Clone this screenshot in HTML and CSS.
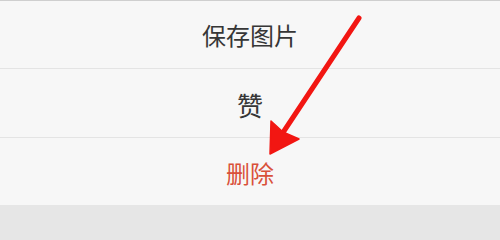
FILE: index.html
```html
<!DOCTYPE html>
<html lang="zh">
<head>
<meta charset="utf-8">
<link rel="stylesheet" href="styles.css">
</head>
<body>
<div class="sheet">
  <div class="item">保存图片</div>
  <div class="item item-like">赞</div>
  <div class="item item-danger">删除</div>
  <div class="footer-strip"></div>
  <svg class="arrow" width="500" height="215" viewBox="0 0 500 215">
    <line x1="359" y1="18" x2="284" y2="131" stroke="#f21612" stroke-width="5" stroke-linecap="round"/>
    <polygon points="270,154 271,121 283,132 299,139" fill="#f21612" stroke="#f21612" stroke-width="1.5" stroke-linejoin="round"/>
  </svg>
</div>
</body>
</html>
```
FILE: styles.css
```css
html, body {
  margin: 0;
  padding: 0;
  background: #e6e6e6;
}
.sheet {
  position: relative;
  width: 500px;
  height: 215px;
  overflow: hidden;
  border-top: 1px solid #cfcfcf;
  box-sizing: border-box;
  display: flex;
  flex-direction: column;
  background: #f7f7f7;
  font-family: "Noto Sans CJK SC", "Noto Sans", sans-serif;
}
.item {
  height: 68px;
  display: flex;
  align-items: center;
  justify-content: center;
  font-size: 24px;
  color: #363636;
  border-bottom: 1px solid #e4e4e4;
  box-sizing: border-box;
}
.item-like {
  height: 69px;
  font-size: 26px;
  padding-top: 3px;
}
.item-danger {
  height: 67px;
  color: #d9513a;
  border-bottom: none;
  padding-top: 2px;
}
.footer-strip {
  flex: 1;
  background: #e6e6e6;
}
.arrow {
  position: absolute;
  left: 0;
  top: -1px;
}
```
